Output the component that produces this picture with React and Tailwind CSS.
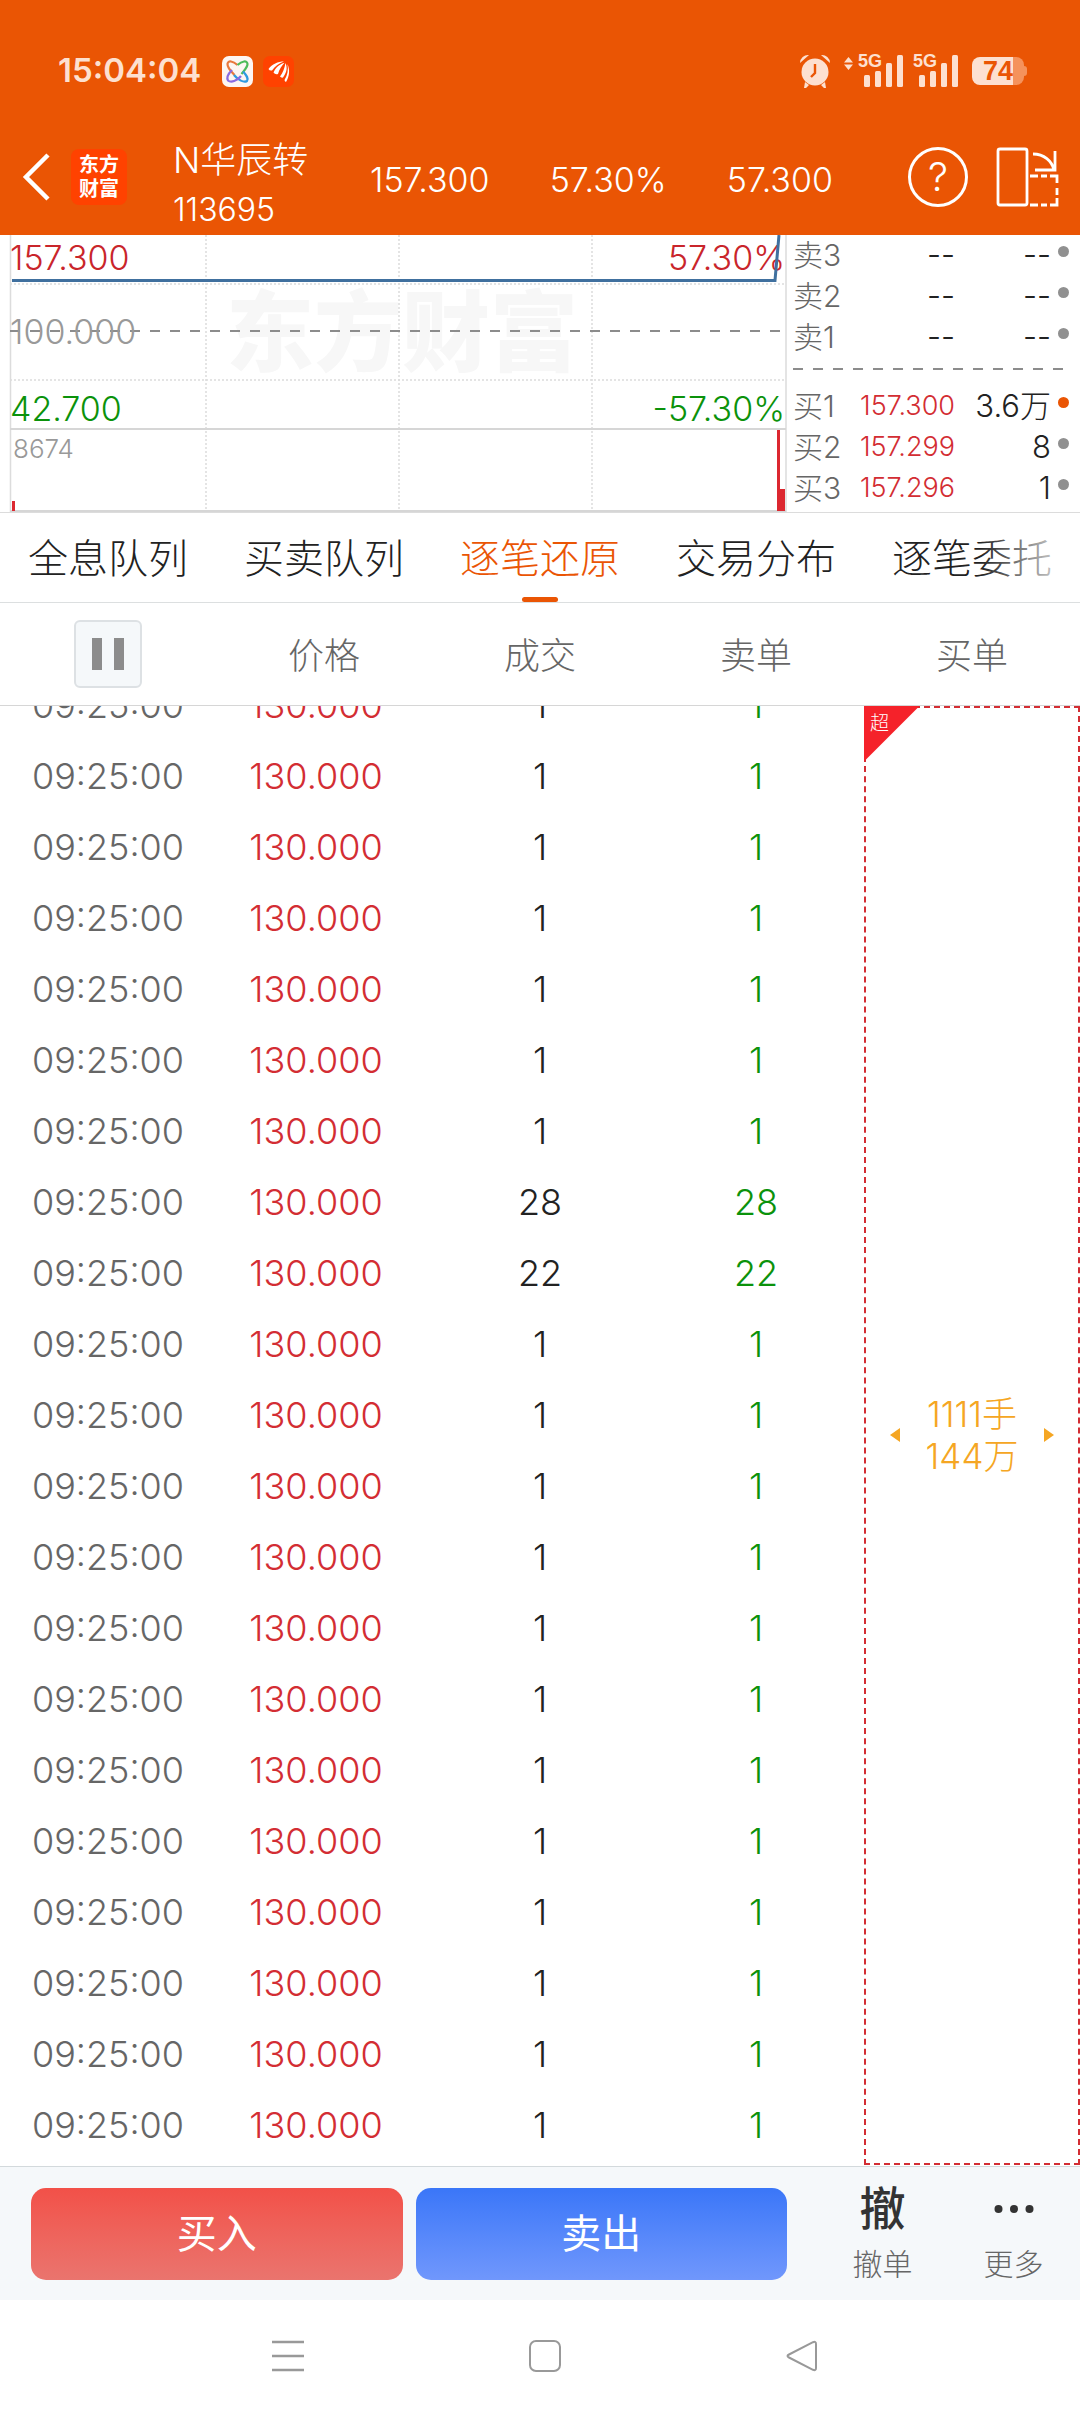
import React from 'react';

const tabs = ['全息队列', '买卖队列', '逐笔还原', '交易分布', '逐笔委托'];

const sells = [
  { name: '卖3', price: '--', qty: '--' },
  { name: '卖2', price: '--', qty: '--' },
  { name: '卖1', price: '--', qty: '--' },
];

const buys = [
  { name: '买1', price: '157.300', qty: '3.6万', active: true },
  { name: '买2', price: '157.299', qty: '8' },
  { name: '买3', price: '157.296', qty: '1' },
];

const volumes = [1, 1, 1, 1, 1, 1, 1, 28, 22, 1, 1, 1, 1, 1, 1, 1, 1, 1, 1, 1, 1];
const trades = volumes.map((volume) => ({ time: '09:25:00', price: '130.000', volume }));

function Signal() {
  return (
    <svg width="40" height="32" viewBox="0 0 40 32" fill="#fde0d0">
      <rect x="0" y="20" width="6" height="12" rx="1.5" />
      <rect x="11" y="16" width="6" height="16" rx="1.5" />
      <rect x="22" y="8" width="6" height="24" rx="1.5" />
      <rect x="33" y="0" width="6" height="32" rx="1.5" />
    </svg>
  );
}

function StatusBar() {
  return (
    <div className="flex h-[142px] items-center pl-[58px] pr-[53px] text-[#fde0d0]">
      <span className="w-[164px] text-[33px] font-semibold">15:04:04</span>
      <svg width="31" height="31" viewBox="0 0 31 31" fill="none" strokeWidth="2.2">
        <rect width="31" height="31" rx="7" fill="#fdf6f2" />
        <path d="M15.500 9C11 5 6 4 5.500 8c-.3 3 3 7 7 11" stroke="#e8783c" />
        <path d="M15.500 9C20 5 25 4 25.500 8c.2 3-3 6-6 10" stroke="#4dbb5a" />
        <path d="M12 19c4 5 10 8 13 6 2-3-1-6-4-9.500" stroke="#2f9be0" />
        <path d="M19 20c-4 5-10 7-13 4.500C4 21 7 17 10 14" stroke="#8a6be0" />
      </svg>
      <svg className="ml-2.5" width="31" height="31" viewBox="0 0 31 31">
        <rect width="31" height="31" rx="7" fill="#ff4200" />
        <path d="M5.500 13C9 8 15 5.500 21 5.500 16 7.500 12 10 9 14.500q-2.500.5-3.500-1.500zM10.500 16.500C13 11 17 8 21.500 6.800 18.500 10 16.500 13 15 18q-3 .8-4.500-1.500zM17 20.500c3-4 4.500-8 5.500-13.500 2 5 1.500 9-2.500 14.500q-1.800.5-3-1zM21.500 24c3-5 4-10 3-16 2.500 6 2 12-1.500 18q-1.300-.5-1.500-2z" fill="#fff" />
      </svg>
      <div className="ml-auto flex items-center">
        <svg width="32" height="34" viewBox="0 0 32 34" fill="#fde0d0">
          <circle cx="16" cy="18" r="13.5" />
          <path d="M1 9a8 8 0 0 1 9-8zM31 9a8 8 0 0 0-9-8zM6 28l4 3-3 3H5zM26 28l-4 3 3 3h2z" />
          <path d="M16 10v9l-4 4" fill="none" stroke="#ea5504" strokeWidth="2.4" />
        </svg>
        <svg className="mb-4 ml-[13px]" width="9" height="13" viewBox="0 0 9 13" fill="#fde0d0">
          <path d="M0 5.500 4.500 0 9 5.500zM0 7.500 4.500 13 9 7.500z" />
        </svg>
        <div className="relative ml-[11px]">
          <span className="absolute -left-1.5 -top-1 font-['Liberation_Sans',sans-serif] text-[18px] font-bold leading-5">5G</span>
          <Signal />
        </div>
        <div className="relative ml-[15px]">
          <span className="absolute -left-1.5 -top-1 font-['Liberation_Sans',sans-serif] text-[18px] font-bold leading-5">5G</span>
          <Signal />
        </div>
        <div className="ml-[13px] flex items-center">
          <div className="flex h-7 w-[52px] items-center justify-center rounded-lg bg-linear-to-r from-[#fde0d0] from-78% to-[#f5925c] to-78% font-['Liberation_Sans',sans-serif] text-[27px] font-bold text-[#ea5504]">
            74
          </div>
          <div className="h-2.5 w-[3px] rounded-r-sm bg-[#f5925c]" />
        </div>
      </div>
    </div>
  );
}

function Header() {
  return (
    <header className="bg-[#ea5504] text-white">
      <StatusBar />
      <div className="flex h-[93px] items-center pb-6 pl-[22px] pr-[21px]">
        <button type="button" aria-label="返回" className="w-[49px]">
          <svg width="28" height="48" viewBox="0 0 28 48" fill="none" stroke="#fff" strokeWidth="4.500">
            <path d="M26 2 4 24l22 22" />
          </svg>
        </button>
        <div className="flex size-14 flex-col items-center justify-center rounded-lg bg-[#ff4200] text-[20px] font-bold leading-6">
          <span>东方</span>
          <span>财富</span>
        </div>
        <div className="ml-[46px] mt-4 flex w-[197px] flex-col">
          <span className="text-[36px] leading-[50px]">N华辰转</span>
          <span className="text-[32px] leading-[50px]">113695</span>
        </div>
        <div className="flex flex-1 gap-[60px] pt-1.5 text-[34px]">
          <span>157.300</span>
          <span>57.30%</span>
          <span>57.300</span>
        </div>
        <button type="button" aria-label="帮助" className="flex size-[60px] items-center justify-center rounded-full border-3 border-white text-[40px]">
          ?
        </button>
        <button type="button" aria-label="横屏" className="ml-7">
          <svg width="63" height="60" viewBox="0 0 63 60" fill="none" stroke="#fff" strokeWidth="2.800">
            <rect x="2" y="2" width="29" height="56" rx="2" />
            <path d="M37 7c11 0 19 7 21 16M59 4v19H39" />
            <path d="M34 29h8M45 29h6M54 29h7v7M61 41v7M61 51v7h-7M51 58h-6M42 58h-8" />
          </svg>
        </button>
      </div>
    </header>
  );
}

function Chart() {
  return (
    <svg viewBox="0 0 787 277" className="w-full font-light">
      <text x="226" y="129" fontSize="88" fontWeight="900" fill="#f7f7f7">东方财富</text>
      <g stroke="#dcdcdc" strokeWidth="1.500">
        <path d="M10.500 0V277M786 0V277" />
        <path d="M206 0V277M399 0V277M592 0V277M10 49H786M10 145H786" strokeDasharray="2 2" />
        <path d="M10 194H786" strokeWidth="2" stroke="#d6d6d6" />
        <path d="M10 276H786" strokeWidth="2" stroke="#d6d6d6" />
      </g>
      <path d="M10 96H780" stroke="#8c8c8c" strokeWidth="2" strokeDasharray="10 10" />
      <g fontSize="34">
        <text x="10" y="35" fill="#c9252b">157.300</text>
        <text x="785" y="35" textAnchor="end" fill="#c9252b">57.30%</text>
        <text x="10" y="109" fill="#999">100.000</text>
        <text x="10" y="186" fill="#0b920b">42.700</text>
        <text x="785" y="186" textAnchor="end" fill="#0b920b">-57.30%</text>
      </g>
      <text x="13" y="223" fontSize="26" fill="#999">8674</text>
      <path d="M12 45.500H775L779 0" fill="none" stroke="#40709f" strokeWidth="3" />
      <path d="M12 266h3v10h-3zM777 195h3v81h-3zM780 254h5v22h-5z" fill="#dc2830" />
    </svg>
  );
}

function QuoteRow({ name, price, qty, active }) {
  const empty = price === '--';
  return (
    <div className="flex h-[41px] items-center whitespace-nowrap">
      <span className="w-[52px] text-[30px] text-[#666]">{name}</span>
      <span className={'flex-1 text-right ' + (empty ? 'text-[31px] text-[#222]' : 'text-[27px] text-[#d32d33]')}>{price}</span>
      <span className="w-24 text-right text-[31px] text-[#222]">{qty}</span>
      <i className={'mb-2 ml-[7px] size-[11px] rounded-full ' + (active ? 'bg-[#ea5504]' : 'bg-[#909090]')} />
    </div>
  );
}

function OrderBook() {
  return (
    <div className="pl-1.5 pr-[11px] font-light">
      {sells.map((row) => <QuoteRow key={row.name} {...row} />)}
      <svg className="h-7 w-full" aria-hidden="true">
        <line x1="0" y1="11" x2="100%" y2="11" stroke="#8c8c8c" strokeWidth="2" strokeDasharray="10 10" />
      </svg>
      {buys.map((row) => <QuoteRow key={row.name} {...row} />)}
    </div>
  );
}

function Tabs() {
  return (
    <nav className="relative grid h-[90px] grid-cols-5 border-b border-[#dcdfe0] font-light">
      {tabs.map((tab) => {
        const active = tab === '逐笔还原';
        return (
          <button key={tab} type="button" className={'relative whitespace-nowrap pt-0.5 text-[40px] ' + (active ? 'text-[#ea5504]' : 'text-[#222]')}>
            {tab}
            {active && <span className="absolute bottom-0 left-1/2 h-[5px] w-9 -translate-x-1/2 rounded-full bg-[#ea5504]" />}
          </button>
        );
      })}
      <div className="pointer-events-none absolute right-0 top-0 h-full w-[100px] bg-linear-to-r from-transparent to-white" />
    </nav>
  );
}

// The first row is scrolled half way under the table head
function Cell({ cut, children }) {
  return (
    <div className={'flex flex-col items-center justify-end overflow-hidden ' + (cut ? 'h-[35px]' : 'h-[71px]')}>
      <span className="leading-[71px]">{children}</span>
    </div>
  );
}

function BigOrder() {
  return (
    <div className="relative flex h-full items-center justify-between border-2 border-dashed border-[#d32d33] px-6 text-[#f5a623]">
      <span className="absolute -left-0.5 -top-0.5 h-14 w-14 bg-[#f5222a] pl-1.5 pt-1 text-[19px] leading-7 text-white [clip-path:polygon(0_0,100%_0,0_100%)]">
        超
      </span>
      <svg width="10" height="14" viewBox="0 0 10 14" fill="#f5a623"><path d="M10 0v14L0 7z" /></svg>
      <span className="text-center text-[35px] leading-[42px]">1111手<br />144万</span>
      <svg width="10" height="14" viewBox="0 0 10 14" fill="#f5a623"><path d="M0 0v14l10-7z" /></svg>
    </div>
  );
}

function TradeTable() {
  return (
    <table className="h-px w-full table-fixed border-collapse font-light">
      <thead>
        <tr className="h-[102px] border-b border-[#d6d6d6] text-[36px] text-[#666]">
          <th className="p-0">
            <button type="button" aria-label="暂停" className="mx-auto flex size-[68px] items-center justify-center gap-3 rounded-md border-2 border-[#dde1e4] bg-[#f5f8fa]">
              <span className="h-8 w-2.5 bg-[#8c8c8c]" />
              <span className="h-8 w-2.5 bg-[#8c8c8c]" />
            </button>
          </th>
          <th className="p-0 pt-1 font-light">价格</th>
          <th className="p-0 pt-1 font-light">成交</th>
          <th className="p-0 pt-1 font-light">卖单</th>
          <th className="p-0 pt-1 font-light">买单</th>
        </tr>
      </thead>
      <tbody className="text-[36px]">
        {trades.map((t, i) => (
          <tr key={i} className="align-top last:h-[75px]">
            <td className="p-0 text-[#666]"><Cell cut={i === 0}>{t.time}</Cell></td>
            <td className="p-0 pr-4 text-[#d32d33]"><Cell cut={i === 0}>{t.price}</Cell></td>
            <td className="p-0 text-[#222]"><Cell cut={i === 0}>{t.volume}</Cell></td>
            <td className="p-0 text-[#0b920b]"><Cell cut={i === 0}>{t.volume}</Cell></td>
            {i === 0 && <td rowSpan={trades.length} className="h-full p-0"><BigOrder /></td>}
          </tr>
        ))}
      </tbody>
    </table>
  );
}

function ActionBar() {
  return (
    <div className="flex h-[134px] items-center gap-[13px] border-t border-[#d3d9dc] bg-[#f5f8fa] pl-[31px]">
      <button type="button" className="h-[92px] flex-1 rounded-[15px] bg-linear-to-b from-[#f25048] to-[#ea746e] text-[40px] text-white">买入</button>
      <button type="button" className="h-[92px] flex-1 rounded-[15px] bg-linear-to-b from-[#3a76f8] to-[#7097fc] text-[40px] text-white">卖出</button>
      <div className="flex w-[280px] pl-[17px] pt-1">
        <button type="button" className="flex w-[131px] flex-col items-center">
          <span className="text-[46px] font-medium leading-[50px] text-[#333]">撤</span>
          <span className="mt-1.5 text-[30px] font-light leading-[50px] text-[#666]">撤单</span>
        </button>
        <button type="button" className="flex w-[131px] flex-col items-center">
          <svg width="40" height="50" viewBox="0 0 40 50" fill="#333">
            <circle cx="4.500" cy="26" r="4" />
            <circle cx="20" cy="26" r="4" />
            <circle cx="35.500" cy="26" r="4" />
          </svg>
          <span className="mt-1.5 text-[30px] font-light leading-[50px] text-[#666]">更多</span>
        </button>
      </div>
    </div>
  );
}

function SystemNav() {
  return (
    <div className="flex h-[112px] items-center justify-center gap-[225px] pl-2.5">
      <button type="button" aria-label="菜单">
        <svg width="32" height="32" viewBox="0 0 32 32" stroke="#999" strokeWidth="2.500"><path d="M0 2h32M0 16h32M0 30h32" /></svg>
      </button>
      <button type="button" aria-label="主页">
        <svg width="32" height="32" viewBox="0 0 32 32" fill="none" stroke="#999" strokeWidth="2"><rect x="1" y="1" width="30" height="30" rx="6" /></svg>
      </button>
      <button type="button" aria-label="后退">
        <svg width="32" height="32" viewBox="0 0 32 32" fill="none" stroke="#999" strokeWidth="2"><path d="M3 14.500 27 2.200Q30 1 30 4v24q0 3-3 1.800L3 17.500Q0 16 3 14.500z" /></svg>
      </button>
    </div>
  );
}

function App() {
  return (
    <div className="flex min-h-screen flex-col bg-white font-['Inter','Noto_Sans_CJK_SC',sans-serif]">
      <div className="font-light">
        <Header />
      </div>
      <section className="grid grid-cols-[787fr_293fr] border-b border-[#dcdcdc]">
        <Chart />
        <OrderBook />
      </section>
      <Tabs />
      <main className="flex-1">
        <TradeTable />
      </main>
      <ActionBar />
      <SystemNav />
    </div>
  );
}

export default App;
